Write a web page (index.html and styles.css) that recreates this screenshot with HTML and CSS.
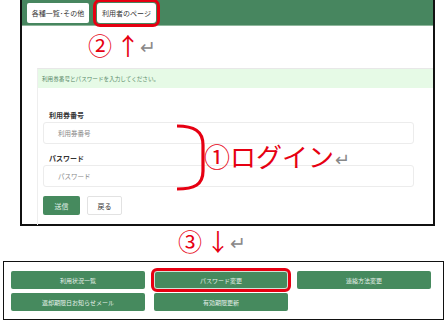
FILE: index.html
```html
<!DOCTYPE html>
<html lang="ja">
<head>
<meta charset="utf-8">
<link rel="stylesheet" href="styles.css">
</head>
<body>
<div class="shot1">
  <div class="topbar">
    <span class="tab">各種一覧･その他</span>
    <span class="tab tab-hl">利用者のページ</span>
  </div>
  <div class="anno anno2"><span class="red">②</span><span class="red arrow">↑</span><span class="ret">↵</span></div>
  <div class="panel">
    <div class="notice">利用券番号とパスワードを入力してください。</div>
    <div class="form">
      <div class="label">利用券番号</div>
      <div class="input">利用券番号</div>
      <div class="label">パスワード</div>
      <div class="input">パスワード</div>
      <div class="btns">
        <span class="btn-send">送信</span>
        <span class="btn-back">戻る</span>
      </div>
    </div>
    <svg class="bracket" width="34" height="70" viewBox="0 0 34 70">
      <path d="M2 3 C19 3 28 8 28 22 L28 48 C28 62 19 66 2 66" fill="none" stroke="#e60012" stroke-width="3.2"/>
    </svg>
    <div class="anno anno1"><span class="red">①ログイン</span><span class="ret">↵</span></div>
  </div>
</div>
<div class="anno anno3"><span class="red">③</span><span class="red arrow">↓</span><span class="ret">↵</span></div>
<div class="shot2">
  <span class="gbtn">利用状況一覧</span>
  <span class="gbtn gbtn-hl">パスワード変更</span>
  <span class="gbtn">連絡方法変更</span>
  <span class="gbtn">返却期限日お知らせメール</span>
  <span class="gbtn">有効期限更新</span>
</div>
</body>
</html>
```
FILE: styles.css
```css
* { box-sizing: border-box; }
html, body { margin: 0; padding: 0; background: #fff; }
body {
  font-family: "Noto Sans CJK JP", "Noto Sans", sans-serif;
  width: 444px;
  height: 324px;
  overflow: hidden;
}
.shot1 {
  margin-left: 20px;
  width: 415px;
  height: 226px;
  border: 2px solid #111;
  border-top: none;
  position: relative;
}
.topbar {
  height: 26px;
  background: #47865f;
  border-bottom: 1px solid #8fb79c;
  display: flex;
  align-items: center;
  padding-left: 5px;
  gap: 8px;
}
.tab {
  background: #fff;
  height: 20px;
  border-radius: 2px;
  font-size: 7px;
  color: #333;
  display: flex;
  align-items: center;
  justify-content: center;
  width: 62px;
}
.tab-hl {
  width: 59px;
  outline: 3px solid #e60012;
  outline-offset: 1px;
  border-radius: 3px;
}
.anno {
  display: flex;
  align-items: center;
  line-height: 1;
}
.red { color: #e60012; }
.ret { color: #888; }
.anno2 .arrow, .anno3 .arrow { margin-left: 4px; }
.anno2 {
  margin-left: 66px;
  margin-top: 7px;
  height: 24px;
  font-size: 24px;
}
.anno2 .ret, .anno3 .ret { font-size: 19px; margin-left: 0; }
.panel {
  margin-top: 11px;
  margin-left: 15px;
  border-top: 1px solid #e8e8e8;
  border-left: 1px solid #eee;
  height: 157px;
  position: relative;
}
.notice {
  background: #e6fae6;
  height: 19px;
  font-size: 5.6px;
  color: #5b8a6a;
  display: flex;
  align-items: center;
  padding-left: 4px;
}
.form {
  padding: 22px 0 0 5px;
  width: 376px;
}
.label {
  font-size: 7px;
  font-weight: bold;
  color: #333;
  padding-left: 6px;
  height: 11px;
  line-height: 11px;
}
.input {
  height: 22px;
  border: 1px solid #ececec;
  border-radius: 3px;
  margin-top: 1px;
  margin-bottom: 9px;
  font-size: 6.5px;
  color: #888;
  display: flex;
  align-items: center;
  padding-left: 14px;
}
.btns {
  display: flex;
  gap: 7px;
  margin-top: 1px;
}
.btn-send, .btn-back {
  height: 19px;
  border-radius: 2px;
  font-size: 7px;
  display: flex;
  align-items: center;
  justify-content: center;
}
.btn-send {
  width: 37px;
  background: #468a5e;
  color: #dfeee5;
}
.btn-back {
  width: 35px;
  border: 1px solid #e2e2e2;
  color: #333;
  background: #fff;
}
.bracket {
  position: absolute;
  left: 137px;
  top: 54px;
}
.anno1 {
  position: absolute;
  left: 166px;
  top: 74px;
  font-size: 26px;
}
.anno1 .ret { font-size: 18px; margin-left: 1px; margin-top: 4px; }
.anno3 {
  margin-left: 178px;
  margin-top: 3px;
  height: 24px;
  font-size: 24px;
}
.shot2 {
  margin-top: 8px;
  margin-left: 3px;
  width: 441px;
  height: 59px;
  border: 1.5px solid #111;
  display: grid;
  grid-template-columns: 134px 134px 134px;
  grid-auto-rows: 18px;
  column-gap: 9px;
  row-gap: 4px;
  padding: 9px 0 0 7px;
}
.gbtn {
  background: #468a5e;
  border-radius: 2px;
  font-size: 6px;
  color: #e6f1ea;
  display: flex;
  align-items: center;
  justify-content: center;
}
.gbtn-hl {
  outline: 3px solid #e60012;
  outline-offset: 0px;
  border-radius: 3px;
  box-shadow: inset 0 0 0 1px #cfe3d6;
}
```
